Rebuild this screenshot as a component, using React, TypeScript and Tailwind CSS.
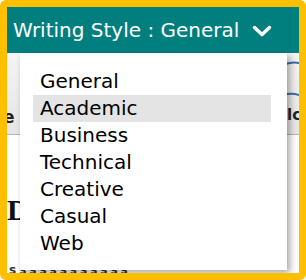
import React from "react";

const styles = ["General", "Academic", "Business", "Technical", "Creative", "Casual", "Web"];

const App = () => {
  const selected = "Academic";
  return (
    <div
      className="w-[306px] h-[280px] border-[7px] border-[#fdbf00] rounded-[6px] overflow-hidden flex flex-col bg-white"
      style={{ fontFamily: '"DejaVu Sans", Verdana, sans-serif' }}
    >
      {/* Header bar */}
      <div className="h-[46px] shrink-0 bg-[#017f7f] flex items-center pl-[6px] gap-[13px] text-white text-[20px] leading-[46px]">
        <span>Writing Style : General</span>
        <svg width="20" height="12" viewBox="0 0 20 12" className="mt-[1px]">
          <polyline points="2.5,2.5 10,9.5 17.5,2.5" fill="none" stroke="white" strokeWidth="3.5" strokeLinecap="round" strokeLinejoin="round" />
        </svg>
      </div>

      {/* Page behind the menu */}
      <div className="relative flex-1">
        <div className="h-[82px] bg-gradient-to-b from-[#f4f4f4] to-[#e6e6e6] border-b border-[#b5b5b5] flex justify-between items-end pb-[4px]">
          <span className="text-[17px] font-bold text-[#222] -ml-[4px]">e</span>
          <div className="relative w-[20px] h-full">
            <svg width="24" height="50" viewBox="0 0 24 50" className="absolute left-[-4px] top-[4px]">
              <path d="M2 12 Q12 4 24 6" fill="none" stroke="#3a6ea5" strokeWidth="2" />
              <path d="M2 42 Q12 34 24 38" fill="none" stroke="#3a6ea5" strokeWidth="2" />
            </svg>
            <span className="absolute left-[-2px] bottom-[4px] text-[15px] font-bold text-[#222]">alc</span>
          </div>
        </div>
        <div className="pt-[60px] text-[30px] font-bold text-[#111] leading-none" style={{ fontFamily: '"Liberation Serif", serif' }}>
          Do
        </div>
        <div className="absolute left-[2px] bottom-[-6px] text-[12px] font-bold tracking-[3px] text-[#333]">
          ssssssssssss
        </div>

        {/* Dropdown menu */}
        <div className="absolute left-[13px] top-0 w-[267px] h-[217px] bg-white shadow-[3px_3px_7px_rgba(0,0,0,0.35)] pt-[15px] pl-[13px] pr-[16px]">
          <ul className="text-[20px] leading-[27px] text-black">
            {styles.map((s) => (
              <li key={s} className={`h-[27px] pl-[7px] ${s === selected ? "bg-[#e4e4e4]" : ""}`}>
                {s}
              </li>
            ))}
          </ul>
        </div>
      </div>
    </div>
  );
};

export default App;
